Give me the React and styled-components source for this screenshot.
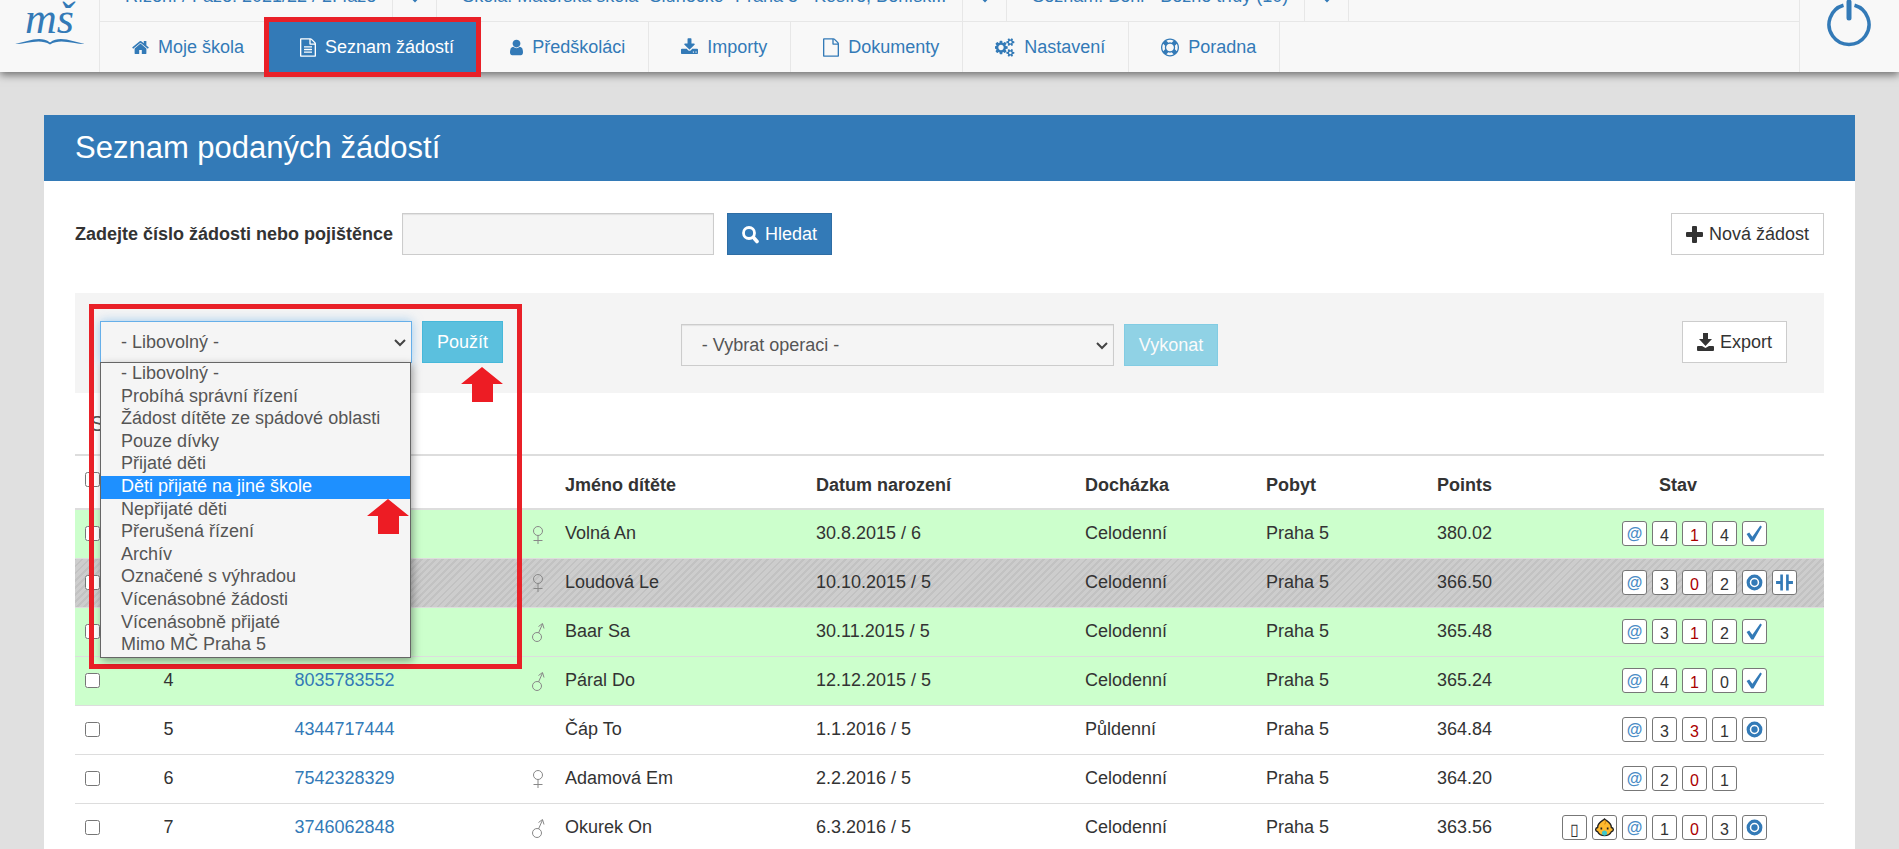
import React from "react";
import styled, { createGlobalStyle } from "styled-components";

const GlobalStyle = createGlobalStyle`
  * { box-sizing: border-box; }
  body {
    margin: 0;
    background: #e0e0e0;
    color: #333;
    font: 18px/25px "Liberation Sans", Arial, sans-serif;
  }
  html { overflow: hidden; }
  a { color: #337ab7; text-decoration: none; }
`;

const FILE = "M1596 380q28 28 48 76t20 88v1152q0 40-28 68t-68 28h-1344q-40 0-68-28t-28-68v-1600q0-40 28-68t68-28h896q40 0 88 20t76 48zm-444-244v376h376q-10-29-22-41l-313-313q-12-12-41-22zm384 1528v-1024h-416q-40 0-68-28t-28-68v-416h-768v1536h1280z";
const SMALL_COG = "v140q0 16-149 31-12 27-30 52 51 113 51 138 0 4-4 7-122 71-124 71-8 0-46-47t-52-68q-20 2-30 2t-30-2q-14 21-52 68t-46 47q-2 0-124-71-4-3-4-7 0-25 51-138-18-25-30-52-149-15-149-31v-140q0-16 149-31 13-29 30-52-51-113-51-138 0-4 4-7 4-2 35-20t59-34 30-16q8 0 46 46.5t52 67.5q20-2 30-2t30 2q51-71 92-112l6-2q4 0 124 70 4 3 4 7 0 25-51 138 17 23 30 52 149 15 149 31z";

// path, left edge and width on the 1792 grid
const icons = {
  home: ["M1472 992v480q0 26-19 45t-45 19h-384v-384h-256v384h-384q-26 0-45-19t-19-45v-480q0-1 .5-3t.5-3l575-474 575 474q1 2 1 6zm223-69l-62 74q-8 9-21 11h-3q-13 0-21-7l-692-577-692 577q-12 8-24 7-13-2-21-11l-62-74q-8-10-7-23.5t11-21.5l719-599q32-26 76-26t76 26l244 204v-195q0-14 9-23t23-9h192q14 0 23 9t9 23v408l219 182q10 8 11 21.5t-7 23.5z", 64, 1664],
  fileText: [FILE + "M512 800q0-14 9-23t23-9h704q14 0 23 9t9 23v64q0 14-9 23t-23 9h-704q-14 0-23-9t-9-23v-64zm736 224q14 0 23 9t9 23v64q0 14-9 23t-23 9h-704q-14 0-23-9t-9-23v-64q0-14 9-23t23-9h704zm0 256q14 0 23 9t9 23v64q0 14-9 23t-23 9h-704q-14 0-23-9t-9-23v-64q0-14 9-23t23-9h704z", 128, 1536],
  file: [FILE, 128, 1536],
  user: ["M1536 1399q0 109-62.5 187t-150.5 78h-854q-88 0-150.5-78t-62.5-187q0-85 8.5-160.5t31.5-152 58.5-131 94-89 134.5-34.5q131 128 313 128t313-128q76 0 134.5 34.5t94 89 58.5 131 31.5 152 8.5 160.5zm-256-887q0 159-112.5 271.5t-271.5 112.5-271.5-112.5-112.5-271.5 112.5-271.5 271.5-112.5 271.5 112.5 112.5 271.5z", 256, 1280],
  download: ["M1344 1344q0-26-19-45t-45-19-45 19-19 45 19 45 45 19 45-19 19-45zm256 0q0-26-19-45t-45-19-45 19-19 45 19 45 45 19 45-19 19-45zm128-224v320q0 40-28 68t-68 28h-1472q-40 0-68-28t-28-68v-320q0-40 28-68t68-28h465l135 136q58 56 136 56t136-56l136-136h464q40 0 68 28t28 68zm-325-569q17 41-14 70l-448 448q-18 19-45 19t-45-19l-448-448q-31-29-14-70 17-39 59-39h256v-448q0-26 19-45t45-19h256q26 0 45 19t19 45v448h256q42 0 59 39z", 64, 1664],
  cogs: ["M832 896q0-106-75-181t-181-75-181 75-75 181 75 181 181 75 181-75 75-181zm768 512q0-52-38-90t-90-38-90 38-38 90q0 53 37.5 90.5t90.5 37.5 90.5-37.5 37.5-90.5zm0-1024q0-52-38-90t-90-38-90 38-38 90q0 53 37.5 90.5t90.5 37.5 90.5-37.5 37.5-90.5zm-384 421v185q0 10-7 19.5t-16 10.5l-155 24q-11 35-32 76 34 48 90 115 7 11 7 20 0 12-7 19-23 30-82.5 89.5t-78.5 59.5q-11 0-21-7l-115-90q-37 19-77 31-11 108-23 155-7 24-30 24h-186q-11 0-20-7.5t-10-17.5l-23-153q-34-10-75-31l-118 89q-7 7-20 7-11 0-21-8-144-133-144-160 0-9 7-19 10-14 41-53t47-61q-23-44-35-82l-152-24q-10-1-17-9.5t-7-19.5v-185q0-10 7-19.5t16-10.5l155-24q11-35 32-76-34-48-90-115-7-11-7-20 0-12 7-20 22-30 82-89t79-59q11 0 21 7l115 90q34-18 77-32 11-108 23-154 7-24 30-24h186q11 0 20 7.5t10 17.5l23 153q34 10 75 31l118-89q8-7 20-7 11 0 21 8 144 133 144 160 0 8-7 19-12 16-42 54t-45 60q23 48 34 82l152 23q10 2 17 10.5t7 19.5zM1856 1338" + SMALL_COG + "M1856 314" + SMALL_COG, 0, 1920],
  ring: ["M896 0q182 0 348 71t286 191 191 286 71 348-71 348-191 286-286 191-348 71-348-71-286-191-191-286-71-348 71-348 191-286 286-191 348-71zm0 128q-190 0-361 90l194 194q82-28 167-28t167 28l194-194q-171-90-361-90zm-678 1129l194-194q-28-82-28-167t28-167l-194-194q-90 171-90 361t90 361zm678 407q190 0 361-90l-194-194q-82 28-167 28t-167-28l-194 194q171 90 361 90zm0-384q159 0 271.5-112.5t112.5-271.5-112.5-271.5-271.5-112.5-271.5 112.5-112.5 271.5 112.5 271.5 271.5 112.5zm484-217l194 194q90-171 90-361t-90-361l-194 194q28 82 28 167t-28 167z", 0, 1792],
};

const Icon = ({ name }) => {
  const [d, x, w] = icons[name];
  return (
    <svg height="19" width={Math.round(w / 97)} viewBox={`${x} 0 ${w} 1792`} fill="currentColor" aria-hidden="true">
      <path d={d} />
    </svg>
  );
};

const nav = [
  { icon: "home", label: "Moje škola" },
  { icon: "fileText", label: "Seznam žádostí", active: true },
  { icon: "user", label: "Předškoláci" },
  { icon: "download", label: "Importy" },
  { icon: "file", label: "Dokumenty" },
  { icon: "cogs", label: "Nastavení" },
  { icon: "ring", label: "Poradna" },
];

const contexts = [
  "Řízení / Fáze: 2021/22 / 2. fáze",
  "Škola: Mateřská škola \"Slunéčko\" Praha 5 - Košíře, Beníšk...",
  "Seznam: Běhl - Běžné třídy (10)",
];

const filters = [
  "- Libovolný -",
  "Probíhá správní řízení",
  "Žádost dítěte ze spádové oblasti",
  "Pouze dívky",
  "Přijaté děti",
  "Děti přijaté na jiné škole",
  "Nepřijaté děti",
  "Přerušená řízení",
  "Archív",
  "Označené s výhradou",
  "Vícenásobné žádosti",
  "Vícenásobně přijaté",
  "Mimo MČ Praha 5",
];

const rows = [
  { n: 1, id: "", sex: "f", name: "Volná An", born: "30.8.2015 / 6", stay: "Celodenní", points: "380.02", nums: [4, 1, 4], mark: "ok", tone: "green" },
  { n: 2, id: "", sex: "f", name: "Loudová Le", born: "10.10.2015 / 5", stay: "Celodenní", points: "366.50", nums: [3, 0, 2], mark: "record", pause: true, tone: "gray" },
  { n: 3, id: "", sex: "m", name: "Baar Sa", born: "30.11.2015 / 5", stay: "Celodenní", points: "365.48", nums: [3, 1, 2], mark: "ok", tone: "green" },
  { n: 4, id: "8035783552", sex: "m", name: "Páral Do", born: "12.12.2015 / 5", stay: "Celodenní", points: "365.24", nums: [4, 1, 0], mark: "ok", tone: "green" },
  { n: 5, id: "4344717444", name: "Čáp To", born: "1.1.2016 / 5", stay: "Půldenní", points: "364.84", nums: [3, 3, 1], mark: "record" },
  { n: 6, id: "7542328329", sex: "f", name: "Adamová Em", born: "2.2.2016 / 5", stay: "Celodenní", points: "364.20", nums: [2, 0, 1] },
  { n: 7, id: "3746062848", sex: "m", name: "Okurek On", born: "6.3.2016 / 5", stay: "Celodenní", points: "363.56", nums: [1, 0, 3], mark: "record", extra: true },
];

// relative column widths
const columns = [32, 123, 229, 96, 251, 269, 181, 171, 105, 292];
const columnsTotal = columns.reduce((a, b) => a + b);

const Sex = ({ type }) => (
  <svg width="14" height="20" viewBox="0 0 14 20" fill="none" stroke="#888" strokeWidth="1" aria-hidden="true">
    {type === "f" ? (
      <path d="M7 1.5a4.5 4.5 0 1 0 0 9a4.5 4.5 0 1 0 0-9M7 10.5V19M2.5 15.5h9" />
    ) : (
      <path d="M6 10.500a4.500 4.500 0 1 0 0 9a4.500 4.500 0 1 0 0-9M7.500 11L11.500 2M7.500 4.500l4-3l1.500 5" />
    )}
  </svg>
);

const Mark = ({ type }) => (
  <svg width="19" height="19" viewBox="0 0 18 18" fill="#337ab7" aria-hidden="true">
    {type === "ok" && <path d="M1.500 9.500l2.500-1.500l3 4L14.500 1.500l1.500 1L8 16.500H6z" />}
    {type === "record" && (
      <>
        <circle cx="9" cy="9" r="6" fill="none" stroke="#337ab7" strokeWidth="3" />
        <circle cx="9" cy="9" r="3" />
      </>
    )}
    {type === "pause" && <path d="M5 1.500h2.500v15H5zM10.500 1.500H13v15h-2.500zM1 7.500H5v3H1zM13 7.500h4v3h-4z" />}
    {type === "baby" && (
      <>
        <path d="M9 1C7 3 2.500 4 2.500 9C0 9.500 0 12.500 2.500 13C5 18 13 18 15.500 13C18 12.500 18 9.500 15.500 9C15.500 4 11 3 9 1z" fill="#ffb92e" stroke="#222" strokeWidth="1.300" />
        <path d="M6 9v2M12 9v2" stroke="#222" strokeWidth="1.600" />
        <path d="M9 2q2 2 0 4" fill="none" stroke="#d98a10" />
        <circle cx="9" cy="14.300" r="2.400" fill="#3cc6c9" />
      </>
    )}
  </svg>
);

const Chevron = () => (
  <ChevronSvg width="12" height="8" viewBox="0 0 12 8" fill="none" stroke="#444" strokeWidth="2" aria-hidden="true">
    <path d="M1 1l5 5l5-5" />
  </ChevronSvg>
);

const Arrow = () => (
  <svg width="42" height="35" viewBox="0 0 42 35" fill="#ed1c24" aria-hidden="true">
    <path d="M21 0L42 17H32V35H11V17H0z" />
  </svg>
);

const App = () => (
  <>
    <GlobalStyle />
    <Header>
      <Logo href="#" aria-label="MŠ">
        <LogoText>mš</LogoText>
        <svg width="70" height="8" viewBox="0 0 70 8" fill="#337ab7" aria-hidden="true">
          <path d="M0 6C12 4 25-3 35 4.500C45-3 58 4 70 6C58 6 45 0 35 6.500C25 0 12 6 0 6z" />
        </svg>
      </Logo>
      <HeaderRows>
        <ContextBar>
          {contexts.map((text) => (
            <React.Fragment key={text}>
              <ContextName href="#">{text}</ContextName>
              <ContextToggle aria-label="Změnit">
                <svg width="10" height="8" viewBox="0 0 10 8" fill="none" stroke="currentColor" strokeWidth="2" aria-hidden="true">
                  <path d="M1 2l4 4l4-4" />
                </svg>
              </ContextToggle>
            </React.Fragment>
          ))}
        </ContextBar>
        <NavBar>
          {nav.map(({ icon, label, active }) => (
            <NavLink key={label} href="#" $active={active}>
              <Icon name={icon} />
              {label}
              {active && <NavFrame />}
            </NavLink>
          ))}
        </NavBar>
      </HeaderRows>
      <Power aria-label="Odhlásit">
        <svg width="46" height="48" viewBox="0 0 46 48" fill="none" stroke="#337ab7" aria-hidden="true">
          <path d="M17.500 5.300A20 20 0 1 0 28.500 5.300" strokeWidth="3.500" />
          <path d="M23 2v16" strokeWidth="5" strokeLinecap="round" />
        </svg>
      </Power>
    </Header>

    <Panel>
      <Title>Seznam podaných žádostí</Title>
      <PanelBody>
        <SearchRow>
          <label htmlFor="search">Zadejte číslo žádosti nebo pojištěnce</label>
          <SearchInput id="search" type="text" />
          <Button $kind="primary">
            <svg width="17" height="19" viewBox="0 0 17 19" fill="none" stroke="currentColor" aria-hidden="true">
              <circle cx="7" cy="8" r="5.500" strokeWidth="2.800" />
              <path d="M11.500 12.500l3.500 4" strokeWidth="3.600" strokeLinecap="round" />
            </svg>
            Hledat
          </Button>
          <Button $right>
            <svg width="17" height="17" viewBox="0 0 17 17" fill="currentColor" aria-hidden="true">
              <path d="M7 0h3q1 0 1 1v5h5q1 0 1 1v3q0 1-1 1h-5v5q0 1-1 1H7q-1 0-1-1v-5H1q-1 0-1-1V7q0-1 1-1h5V1q0-1 1-1z" />
            </svg>
            Nová žádost
          </Button>
        </SearchRow>

        <FilterBar>
          <FilterArea>
            <SelectWrap>
              <Select $focus aria-label="Filtr" defaultValue="- Libovolný -">
                {filters.map((f) => <option key={f}>{f}</option>)}
              </Select>
              <Chevron />
              <Menu>
                {filters.map((f) => (
                  <MenuItem key={f} $selected={f === "Děti přijaté na jiné škole"}>{f}</MenuItem>
                ))}
              </Menu>
              <MenuPointer><Arrow /></MenuPointer>
            </SelectWrap>
            <ApplyWrap>
              <Button $kind="info">Použít</Button>
              <ApplyPointer><Arrow /></ApplyPointer>
            </ApplyWrap>
            <FilterFrame />
          </FilterArea>
          <OperationArea>
            <SelectWrap $wide>
              <Select aria-label="Operace">
                <option>- Vybrat operaci -</option>
              </Select>
              <Chevron />
            </SelectWrap>
            <Button $kind="info" disabled>Vykonat</Button>
          </OperationArea>
          <Button $right>
            <svg width="17" height="18" viewBox="0 0 17 18" fill="currentColor" aria-hidden="true">
              <path d="M6 0h5v6h4l-6.500 7l-6.500-7h4zM1 13h4l3.500 2l3.500-2h4q1 0 1 1v3q0 1-1 1H1q-1 0-1-1v-3q0-1 1-1z" />
            </svg>
            Export
          </Button>
        </FilterBar>

        <Summary>S</Summary>
        <Table>
          <colgroup>
            {columns.map((w, i) => <Col key={i} $w={w} />)}
          </colgroup>
          <thead>
            <tr>
              <Th $top><Check type="checkbox" aria-label="Vybrat vše" /></Th>
              <Th />
              <Th />
              <Th />
              <Th>Jméno dítěte</Th>
              <Th>Datum narození</Th>
              <Th>Docházka</Th>
              <Th>Pobyt</Th>
              <Th>Points</Th>
              <Th $center>Stav</Th>
            </tr>
          </thead>
          <tbody>
            {rows.map((r) => (
              <Row key={r.n} $tone={r.tone}>
                <Td><Check type="checkbox" aria-label={`Vybrat ${r.name}`} /></Td>
                <Td $center>{r.id && r.n}</Td>
                <Td $center>{r.id && <a href="#">{r.id}</a>}</Td>
                <Td $end>{r.sex && <Sex type={r.sex} />}</Td>
                <Td>{r.name}</Td>
                <Td>{r.born}</Td>
                <Td>{r.stay}</Td>
                <Td>Praha 5</Td>
                <Td>{r.points}</Td>
                <Td>
                  <Badges>
                    <BadgesLead>
                      {r.extra && <Badge $low>▯</Badge>}
                      {r.extra && <Badge><Mark type="baby" /></Badge>}
                    </BadgesLead>
                    <Badge $at>@</Badge>
                    <Badge $low>{r.nums[0]}</Badge>
                    <Badge $low $red>{r.nums[1]}</Badge>
                    <Badge $low>{r.nums[2]}</Badge>
                    {r.mark && <Badge><Mark type={r.mark} /></Badge>}
                    {r.pause && <Badge><Mark type="pause" /></Badge>}
                  </Badges>
                </Td>
              </Row>
            ))}
          </tbody>
        </Table>
      </PanelBody>
    </Panel>
  </>
);

const Header = styled.header`
  display: flex;
  height: 72px;
  background: #f8f8f8;
  box-shadow: 0 3px 8px rgba(0, 0, 0, 0.5);
`;

const Logo = styled.a`
  display: flex;
  flex-direction: column;
  align-items: center;
  width: 100px;
  border-right: 1px solid #e7e7e7;
`;

const LogoText = styled.span`
  font: italic 44px/38px "Liberation Serif", "Times New Roman", serif;
`;

const HeaderRows = styled.div`
  flex: 1;
  display: flex;
  flex-direction: column;
  justify-content: flex-end;
`;

const ContextBar = styled.div`
  display: flex;
  align-items: flex-end;
  height: 22px;
  border-bottom: 1px solid #e7e7e7;
`;

const ContextName = styled.a`
  display: flex;
  align-items: flex-end;
  height: 51px;
  padding: 0 16px 12px 25px;
  border-right: 1px solid #e7e7e7;
`;

const ContextToggle = styled.button`
  display: flex;
  align-items: flex-end;
  justify-content: center;
  width: 44px;
  height: 51px;
  padding: 0 0 18px;
  border: 0;
  border-right: 1px solid #e7e7e7;
  background: none;
  color: #337ab7;
`;

const NavBar = styled.nav`
  display: flex;
  height: 50px;
`;

const NavLink = styled.a`
  position: relative;
  display: flex;
  align-items: center;
  gap: 9px;
  padding: 0 23px 0 32px;
  border-right: 1px solid #e7e7e7;
  ${({ $active }) => $active && "background: #337ab7; color: #fff;"}
`;

const NavFrame = styled.span`
  position: absolute;
  inset: -5px -4px -5px -4px;
  border: 5px solid #e92028;
`;

const Power = styled.button`
  display: flex;
  align-items: flex-start;
  justify-content: center;
  width: 100px;
  padding: 0 2px 0 0;
  border: 0;
  border-left: 1px solid #e7e7e7;
  background: none;
`;

const Panel = styled.main`
  margin: 43px 44px 0;
  background: #fff;
`;

const Title = styled.h1`
  margin: 0;
  padding: 13px 31px;
  background: #337ab7;
  color: #fff;
  font-size: 31px;
  line-height: 40px;
  font-weight: 400;
`;

const PanelBody = styled.div`
  padding: 32px 31px;
`;

const SearchRow = styled.div`
  display: flex;
  align-items: center;
  margin-bottom: 38px;

  label {
    margin-right: 9px;
    font-weight: 700;
  }
`;

const SearchInput = styled.input`
  width: 312px;
  height: 42px;
  margin-right: 13px;
  border: 1px solid #ccc;
  background: #f5f5f5;
  box-shadow: inset 0 1px 1px rgba(0, 0, 0, 0.08);
`;

const kinds = {
  primary: "background: #337ab7; border-color: #2e6da4; color: #fff;",
  info: "background: #5bc0de; border-color: #46b8da; color: #fff;",
};

const Button = styled.button`
  display: flex;
  align-items: center;
  gap: 6px;
  height: 42px;
  padding: 0 14px;
  border: 1px solid #ccc;
  background: #fff;
  color: #333;
  font: inherit;
  ${({ $kind }) => kinds[$kind]}
  ${({ $right }) => $right && "margin-left: auto;"}

  &:disabled {
    opacity: 0.65;
  }
`;

const FilterBar = styled.div`
  display: flex;
  align-items: flex-start;
  height: 100px;
  padding: 28px 37px 0 25px;
  background: #f4f4f4;
`;

const FilterArea = styled.div`
  position: relative;
  display: flex;
  gap: 10px;
  width: 32%;
  min-width: 424px;
`;

const FilterFrame = styled.div`
  position: absolute;
  top: -17px;
  left: -11px;
  width: 433px;
  height: 365px;
  border: 5px solid #e92028;
  pointer-events: none;
`;

const OperationArea = styled.div`
  display: flex;
  gap: 10px;
  padding: 3px 0 0 41px;
`;

const SelectWrap = styled.div`
  position: relative;
  width: ${({ $wide }) => ($wide ? 433 : 312)}px;
`;

const Select = styled.select`
  appearance: none;
  width: 100%;
  height: 42px;
  padding: 0 20px;
  border: 1px solid ${({ $focus }) => ($focus ? "#66afe9" : "#ccc")};
  border-radius: 0;
  background: #f5f5f5;
  box-shadow: ${({ $focus }) => ($focus ? "0 0 10px rgba(102, 175, 233, 0.6)" : "inset 0 1px 1px rgba(0, 0, 0, 0.08)")};
  color: #555;
  font: inherit;
`;

const ChevronSvg = styled.svg`
  position: absolute;
  top: 18px;
  right: 6px;
  pointer-events: none;
`;

const Menu = styled.ul`
  position: absolute;
  z-index: 1;
  top: 41px;
  left: 0;
  right: 1px;
  display: flex;
  flex-direction: column;
  height: 296px;
  margin: 0;
  padding: 0;
  border: 1px solid #666;
  background: #f5f5f5;
  box-shadow: 2px 3px 8px rgba(0, 0, 0, 0.35);
  list-style: none;
`;

const MenuItem = styled.li`
  flex: 1;
  padding: 0 20px;
  line-height: 20px;
  color: ${({ $selected }) => ($selected ? "#fff" : "#555")};
  ${({ $selected }) => $selected && "background: #1e90ff;"}
`;

const MenuPointer = styled.div`
  position: absolute;
  z-index: 2;
  top: 178px;
  right: 3px;
`;

const ApplyWrap = styled.div`
  position: relative;
`;

const ApplyPointer = styled.div`
  position: absolute;
  top: 46px;
  right: 0;
`;

const Summary = styled.h2`
  margin: 0;
  padding: 17px 15px;
  color: #555;
  font-size: 22px;
  line-height: 27px;
  font-weight: 400;
`;

const Table = styled.table`
  width: 100%;
  border-collapse: collapse;
  table-layout: fixed;
`;

const Col = styled.col`
  width: ${({ $w }) => ($w / columnsTotal) * 100}%;
`;

const Th = styled.th`
  height: 54px;
  padding: ${({ $top }) => ($top ? "16px 10px 0" : "6px 10px 0")};
  border: solid #ddd;
  border-width: 2px 0;
  text-align: ${({ $center }) => ($center ? "center" : "left")};
  vertical-align: ${({ $top }) => ($top ? "top" : "middle")};
`;

const tones = {
  green: "background: #cfc;",
  gray: "background: repeating-linear-gradient(135deg, #c2c2c2 0 2px, #cdcdcd 2px 5px);",
};

const Row = styled.tr`
  height: 49px;
  ${({ $tone }) => tones[$tone]}
`;

const Td = styled.td`
  padding: 0 10px;
  border-bottom: 1px solid #ddd;
  text-align: ${({ $center, $end }) => ($center ? "center" : $end ? "right" : "left")};

  svg { vertical-align: middle; }
`;

const Check = styled.input`
  display: block;
  width: 15px;
  height: 15px;
  margin: 0;
`;

const Badges = styled.div`
  display: flex;
  gap: 5px;
  padding-left: 20px;
`;

const BadgesLead = styled.div`
  display: flex;
  justify-content: flex-end;
  gap: 5px;
  width: 55px;
`;

const Badge = styled.span`
  flex: none;
  display: flex;
  align-items: center;
  justify-content: center;
  width: 25px;
  height: 25px;
  padding-top: ${({ $low }) => ($low ? 4 : 0)}px;
  border: 1px solid #777;
  border-radius: 3px;
  background: #fff;
  color: ${({ $red, $at }) => ($red ? "#a00" : $at ? "#4a8cc6" : "#333")};
  font-size: 16px;
  line-height: 20px;
  font-weight: ${({ $at }) => ($at ? 700 : 400)};
`;

export default App;
